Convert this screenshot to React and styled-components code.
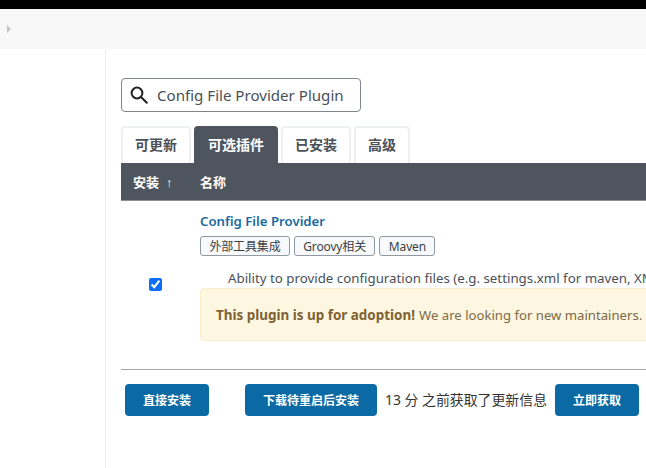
import styled, { createGlobalStyle } from "styled-components";

const GlobalStyle = createGlobalStyle`
  html, body {
    margin: 0;
    padding: 0;
    width: 646px;
    height: 468px;
    overflow: hidden;
    background: #fff;
    font-family: "Noto Sans", "Noto Sans CJK SC", sans-serif;
    color: #333;
  }
`;

const TopBar = styled.div`
  height: 9px;
  background: #000;
`;

const Breadcrumbs = styled.div`
  height: 40px;
  background: #f8f8f8;
  display: flex;
  align-items: center;
  padding-left: 7px;
`;

const Caret = styled.span`
  width: 0;
  height: 0;
  border-left: 4px solid #c4c4c4;
  border-top: 4px solid transparent;
  border-bottom: 4px solid transparent;
`;

const Page = styled.div`
  display: flex;
  height: 419px;
`;

const Side = styled.div`
  width: 105px;
  flex: none;
  border-right: 1px solid #eceef0;
`;

const Main = styled.div`
  width: 700px;
  flex: none;
  padding: 29px 0 0 15px;
`;

const SearchBox = styled.div`
  box-sizing: border-box;
  width: 240px;
  height: 34px;
  border: 1px solid #80868b;
  border-radius: 4px;
  display: flex;
  align-items: center;
  padding-left: 8px;
  gap: 9px;
  font-size: 15.1px;
  color: #495057;
`;

const Tabs = styled.div`
  display: flex;
  gap: 3px;
  margin-top: 14px;
  height: 37px;
`;

const Tab = styled.div`
  box-sizing: border-box;
  height: 37px;
  padding: 0 12px 3px;
  display: flex;
  align-items: center;
  font-size: 14px;
  font-weight: 700;
  border-radius: 4px 4px 0 0;
  color: ${(p) => (p.$active ? "#fff" : "#4b5058")};
  background: ${(p) => (p.$active ? "#4f555e" : "#fff")};
  border: 2px solid ${(p) => (p.$active ? "#4f555e" : "#edf0f3")};
  border-bottom: none;
`;

const TableHead = styled.div`
  box-sizing: border-box;
  height: 38px;
  background: #4f555e;
  border-bottom: 1px solid #8a9097;
  display: flex;
  align-items: center;
  color: #fff;
  font-size: 13px;
  font-weight: 700;
`;

const InstallCol = styled.div`
  width: 79px;
  flex: none;
  padding-left: 12px;
  box-sizing: border-box;
`;

const SortArrow = styled.span`
  margin-left: 7px;
  font-family: "Liberation Sans", sans-serif;
  font-size: 13px;
`;

const Row = styled.div`
  display: flex;
  padding-top: 10px;
  height: 169px;
  box-sizing: border-box;
  border-bottom: 1px solid #a3a7ab;
`;

const CheckCell = styled.div`
  width: 79px;
  flex: none;
  display: flex;
  justify-content: center;
  padding: 67px 10px 0 0;
  box-sizing: border-box;
`;

const Check = styled.input`
  width: 13px;
  height: 13px;
  margin: 0;
  accent-color: #0d6efd;
`;

const NameCell = styled.div`
  flex: 1;
`;

const PluginName = styled.div`
  font-size: 13.2px;
  font-weight: 600;
  line-height: 20px;
  color: #1a6a9e;
`;

const Labels = styled.div`
  display: flex;
  gap: 4px;
  margin-top: 5px;
`;

const Label = styled.span`
  box-sizing: border-box;
  height: 20px;
  padding: 0 8.4px;
  border: 1px solid #8f99a3;
  border-radius: 3px;
  background: #f8f9fa;
  display: flex;
  align-items: center;
  font-size: 12px;
  letter-spacing: -0.15px;
  color: #3a3f44;
`;

const Excerpt = styled.div`
  margin-top: 12px;
  padding-left: 28px;
  font-size: 13.3px;
  line-height: 20px;
  white-space: nowrap;
  color: #495057;
`;

const Notice = styled.div`
  box-sizing: border-box;
  height: 53px;
  padding-left: 15px;
  display: flex;
  align-items: center;
  gap: 4px;
  background: #fdf6e0;
  border: 1px solid #fbeccb;
  border-radius: 4px;
  font-size: 13.15px;
  white-space: nowrap;
  color: #7c6a48;
`;

const Strong = styled.strong`
  font-size: 13.45px;
  color: #7f6234;
`;

const Actions = styled.div`
  display: flex;
  align-items: center;
  margin-top: 14px;
  padding-left: 4px;
`;

const Button = styled.div`
  box-sizing: border-box;
  width: ${(p) => p.$width}px;
  height: 32px;
  margin-left: ${(p) => p.$gap || 0}px;
  display: flex;
  align-items: center;
  justify-content: center;
  background: #0b69a3;
  border-radius: 4px;
  color: #fff;
  font-size: 12px;
  font-weight: 700;
`;

const UpdateInfo = styled.span`
  width: 162px;
  margin: 0 8px 0 8px;
  padding-bottom: 3px;
  font-size: 13.9px;
  color: #333;
  white-space: nowrap;
`;

export default function App() {
  return (
    <>
      <GlobalStyle />
      <TopBar />
      <Breadcrumbs>
        <Caret />
      </Breadcrumbs>
      <Page>
        <Side />
        <Main>
          <SearchBox>
            <svg width="18" height="18" viewBox="0 0 18 18" fill="none" stroke="#222" strokeWidth="2">
              <circle cx="7" cy="7" r="5.4" />
              <path d="M11 11l5.8 5.8" strokeLinecap="round" />
            </svg>
            Config File Provider Plugin
          </SearchBox>
          <Tabs>
            <Tab>可更新</Tab>
            <Tab $active>可选插件</Tab>
            <Tab>已安装</Tab>
            <Tab>高级</Tab>
          </Tabs>
          <TableHead>
            <InstallCol>
              安装<SortArrow>↑</SortArrow>
            </InstallCol>
            <span>名称</span>
          </TableHead>
          <Row>
            <CheckCell>
              <Check type="checkbox" defaultChecked />
            </CheckCell>
            <NameCell>
              <PluginName>Config File Provider</PluginName>
              <Labels>
                <Label>外部工具集成</Label>
                <Label>Groovy相关</Label>
                <Label>Maven</Label>
              </Labels>
              <Excerpt>Ability to provide configuration files (e.g. settings.xml for maven, XML, groovy, custom files,...)</Excerpt>
              <Notice>
                <Strong>This plugin is up for adoption!</Strong> We are looking for new maintainers.
              </Notice>
            </NameCell>
          </Row>
          <Actions>
            <Button $width={84}>直接安装</Button>
            <Button $width={132} $gap={36}>下载待重启后安装</Button>
            <UpdateInfo>13 分 之前获取了更新信息</UpdateInfo>
            <Button $width={84}>立即获取</Button>
          </Actions>
        </Main>
      </Page>
    </>
  );
}
